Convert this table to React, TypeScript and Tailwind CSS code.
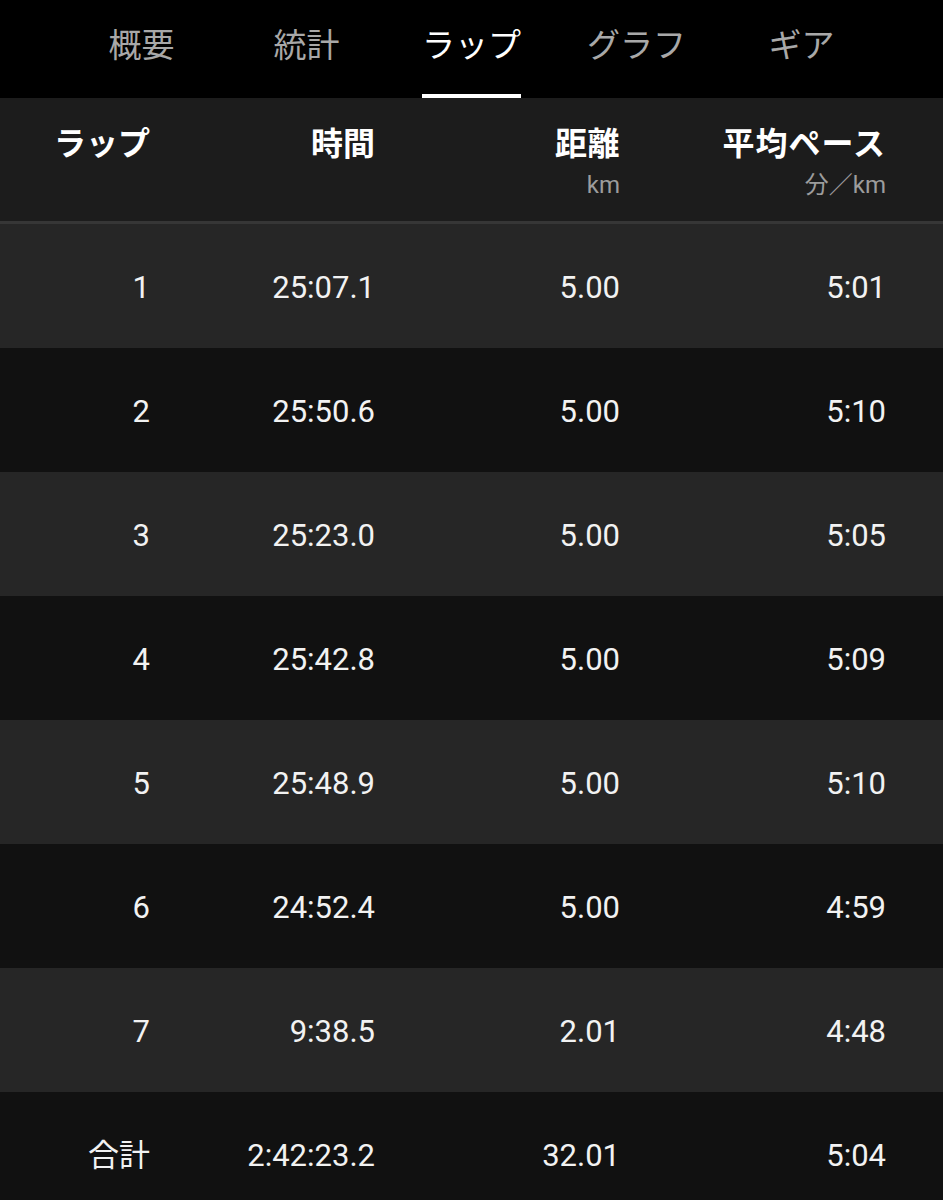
import React from 'react';

const TABS = ['概要', '統計', 'ラップ', 'グラフ', 'ギア'];

const LAPS = [
  { lap: '1', time: '25:07.1', dist: '5.00', pace: '5:01' },
  { lap: '2', time: '25:50.6', dist: '5.00', pace: '5:10' },
  { lap: '3', time: '25:23.0', dist: '5.00', pace: '5:05' },
  { lap: '4', time: '25:42.8', dist: '5.00', pace: '5:09' },
  { lap: '5', time: '25:48.9', dist: '5.00', pace: '5:10' },
  { lap: '6', time: '24:52.4', dist: '5.00', pace: '4:59' },
  { lap: '7', time: '9:38.5', dist: '2.01', pace: '4:48' },
  { lap: '合計', time: '2:42:23.2', dist: '32.01', pace: '5:04' },
];

const cols = 'grid grid-cols-[150px_225px_245px_266px] text-right';

export default function App() {
  const active = 'ラップ';

  return (
    <div className="min-h-screen w-[943px] bg-[#111111] text-white font-['Roboto','Noto_Sans_CJK_JP',sans-serif] overflow-hidden">
      {/* tabs */}
      <nav className="h-[98px] bg-black flex justify-center">
        {TABS.map((tab) => (
          <div key={tab} className="w-[165px] flex justify-center">
            <div className="h-full flex flex-col">
              <div
                className={`flex-1 flex items-center pb-[4px] text-[33px] leading-none ${
                  tab === active ? 'text-white' : 'text-[#a8a8a8]'
                }`}
              >
                {tab}
              </div>
              <div className={`h-[4px] ${tab === active ? 'bg-white' : 'bg-transparent'}`} />
            </div>
          </div>
        ))}
      </nav>

      {/* header */}
      <div className="h-[126px] bg-[#1c1c1c] border-b-[3px] border-[#363636]">
        <div className={`${cols} pt-[27px]`}>
          <div className="text-[32px] font-bold leading-[38px]">ラップ</div>
          <div className="text-[32px] font-bold leading-[38px]">時間</div>
          <div className="flex flex-col items-end">
            <span className="text-[32px] font-bold leading-[38px] tracking-[0.5px]">距離</span>
            <span className="mt-[8px] text-[24px] leading-[28px] text-[#9c9c9c]">km</span>
          </div>
          <div className="flex flex-col items-end">
            <span className="text-[32px] font-bold leading-[38px] tracking-[1px]">平均ペース</span>
            <span className="mt-[8px] text-[24px] leading-[28px] text-[#9c9c9c]">分／km</span>
          </div>
        </div>
      </div>

      {/* rows */}
      {LAPS.map((row, i) => (
        <div
          key={row.lap}
          className={`h-[124px] flex items-center pt-[3px] ${i % 2 === 0 ? 'bg-[#262626]' : 'bg-[#111111]'}`}
        >
          <div className={`${cols} w-full text-[31px] leading-none text-[#f2f2f2]`}>
            <div>{row.lap}</div>
            <div>{row.time}</div>
            <div>{row.dist}</div>
            <div>{row.pace}</div>
          </div>
        </div>
      ))}
    </div>
  );
}
